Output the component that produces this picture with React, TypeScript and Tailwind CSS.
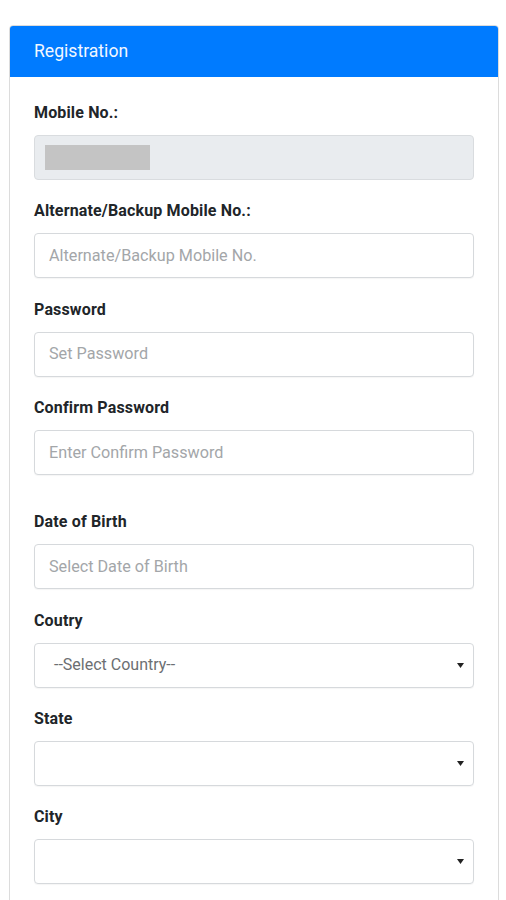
import React from "react";

function Label({ children }: { children: React.ReactNode }) {
  return (
    <div className="h-[20px] leading-[20px] text-[16px] tracking-[0.15px] font-bold text-[#212529] mb-[12px]">
      {children}
    </div>
  );
}

function TextInput({ placeholder }: { placeholder: string }) {
  return (
    <div className="h-[45px] border border-[#d6d9dc] rounded-[4px] bg-white flex items-center pl-[14px] text-[16.2px] text-[#a3a6a9] shadow-[0_1px_1px_rgba(0,0,0,0.04)]">
      {placeholder}
    </div>
  );
}

function SelectBox({ value }: { value?: string }) {
  return (
    <div className="h-[45px] border border-[#d6d9dc] rounded-[4px] bg-white flex items-center pl-[19px] pr-[8px] text-[16px] text-[#6c6f72] shadow-[0_1px_1px_rgba(0,0,0,0.04)]">
      <span className="flex-1">{value ?? ""}</span>
      <svg width="7" height="5" viewBox="0 0 7 5" className="mr-[1px]">
        <path d="M0 0 H7 L3.5 5 Z" fill="#222" />
      </svg>
    </div>
  );
}

export default function App() {
  return (
    <div
      className="min-h-[900px] bg-white pt-[25px] pl-[9px] pr-[7px]"
      style={{ fontFamily: "Roboto, 'Liberation Sans', Arial, sans-serif" }}
    >
      <div className="w-[490px] border border-[#dcdcdc] rounded-[4px] overflow-hidden">
        <div className="h-[51px] bg-[#007bff] flex items-center pl-[24px] text-[17.6px] text-[#f2f7ff]">
          Registration
        </div>
        <div className="px-[24px] pt-[26px] pb-[40px] flex flex-col">
          <div className="mb-[21.4px]">
            <Label>Mobile No.:</Label>
            <div className="h-[45px] border border-[#d9dcdf] rounded-[4px] bg-[#e9ecef] flex items-center pl-[10px]">
              <div className="w-[105px] h-[25px] bg-[#c4c4c4]" />
            </div>
          </div>
          <div className="mb-[21.4px]">
            <Label>Alternate/Backup Mobile No.:</Label>
            <TextInput placeholder="Alternate/Backup Mobile No." />
          </div>
          <div className="mb-[21.4px]">
            <Label>Password</Label>
            <TextInput placeholder="Set Password" />
          </div>
          <div className="mb-[37px]">
            <Label>Confirm Password</Label>
            <TextInput placeholder="Enter Confirm Password" />
          </div>
          <div className="mb-[21.4px]">
            <Label>Date of Birth</Label>
            <TextInput placeholder="Select Date of Birth" />
          </div>
          <div className="mb-[21.4px]">
            <Label>Coutry</Label>
            <SelectBox value="--Select Country--" />
          </div>
          <div className="mb-[21.4px]">
            <Label>State</Label>
            <SelectBox />
          </div>
          <div className="mb-[21.4px]">
            <Label>City</Label>
            <SelectBox />
          </div>
        </div>
      </div>
    </div>
  );
}
